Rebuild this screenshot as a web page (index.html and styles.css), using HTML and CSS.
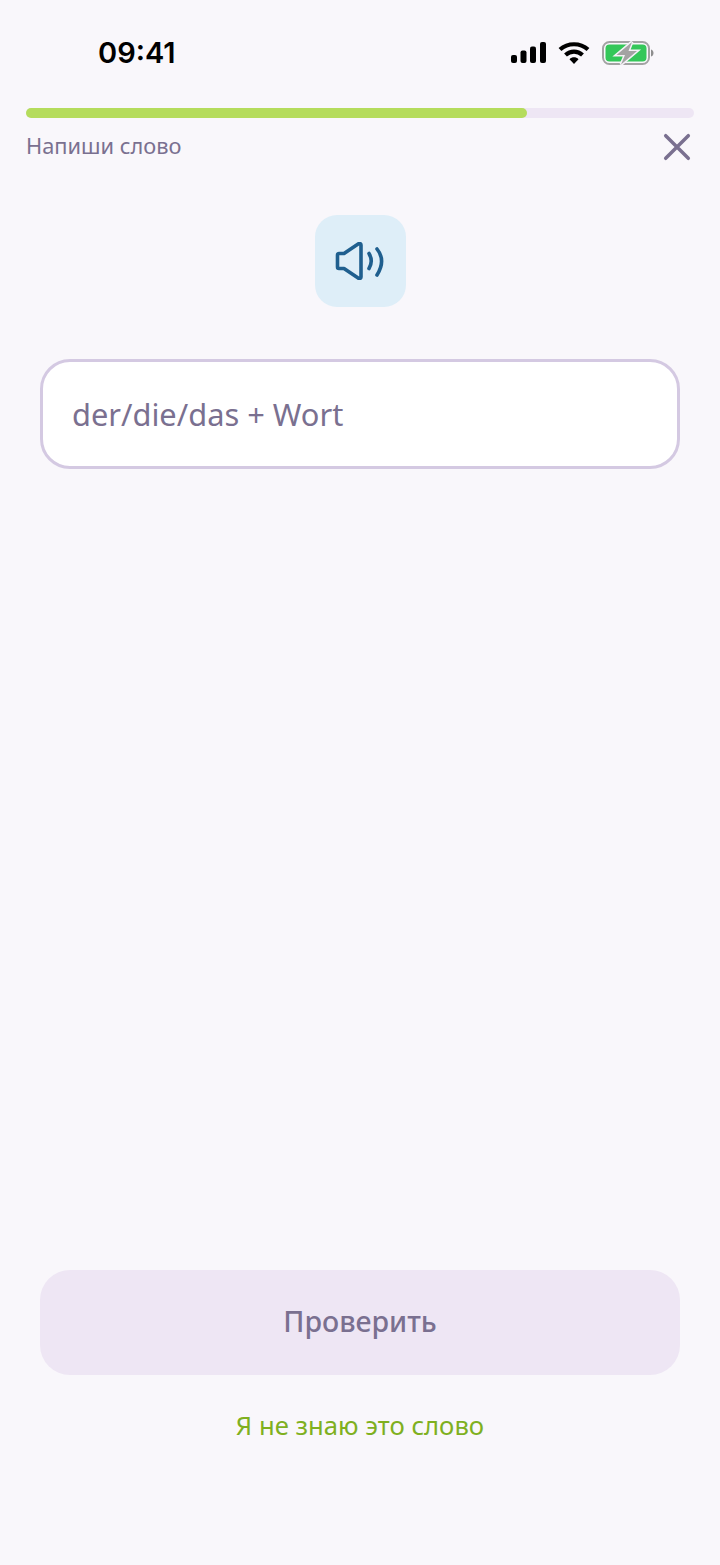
FILE: index.html
```html
<!DOCTYPE html>
<html lang="en">
<head>
  <meta name="viewport" content="width=device-width, initial-scale=1.0">
  <meta charset="UTF-8">
  <title>Напиши слово</title>
  <link rel="stylesheet" href="styles.css">
</head>
<body>
  <div class="screen">
    <div class="status-bar">
      <span class="time">09:41</span>
      <div class="status-icons">
        <svg class="signal" width="38" height="24" viewBox="0 0 38 24">
          <rect x="3" y="14" width="6" height="8" rx="2"/>
          <rect x="12.500" y="9.500" width="6" height="12.500" rx="2"/>
          <rect x="22" y="5.500" width="6" height="16.500" rx="2"/>
          <rect x="32" y="1" width="6" height="21" rx="2"/>
        </svg>
        <svg class="wifi" width="32" height="24" viewBox="0 0 32 24">
          <path d="M2 8.500C9.800 1.500 22.200 1.500 30 8.500" fill="none" stroke="#000" stroke-width="4.200"/>
          <path d="M7.500 14C12.500 9.500 19.500 9.500 24.500 14" fill="none" stroke="#000" stroke-width="4.200"/>
          <path d="M11.500 18.200C14 15.600 18 15.600 20.500 18.200L16 23Z"/>
        </svg>
        <svg class="battery" width="52" height="26" viewBox="0 0 52 26">
          <rect x="1" y="2" width="46" height="22" rx="6.500" fill="none" stroke="#a3a3a3" stroke-width="2"/>
          <rect x="3.500" y="4.500" width="41" height="17" rx="4" fill="#34c759"/>
          <path d="M49 9.500C50.800 10 51.500 11.500 51.500 13C51.500 14.500 50.800 16 49 16.500Z" fill="#8e8e8e"/>
          <path d="M30 2L14.500 15H23L19 24.500L35 11H26.500Z" fill="#a3a3a3" stroke="#f4f1f6" stroke-width="3" paint-order="stroke"/>
        </svg>
      </div>
    </div>

    <div class="progress">
      <div class="progress-fill"></div>
    </div>

    <div class="task-row">
      <span class="task-label">Напиши слово</span>
      <svg class="close" width="28" height="28" viewBox="0 0 28 28">
        <path d="M2.700 2.700L25.300 25.300M25.300 2.700L2.700 25.300" fill="none" stroke="#7a7090" stroke-width="3.500" stroke-linecap="round"/>
      </svg>
    </div>

    <button class="sound-btn">
      <svg width="50" height="38" viewBox="0 0 50 38">
        <path d="M2.500 13V25C2.500 26 3.200 26.500 4 26.500H9L23.500 36.200C24.800 37 26 36.400 26 35V3C26 1.600 24.800 1 23.500 1.800L9 11.500H4C3.200 11.500 2.500 12 2.500 13Z" fill="none" stroke="#1f5f8f" stroke-width="3.600" stroke-linejoin="round"/>
        <path d="M34 11.500C37 16.500 37 21.500 34 26.500" fill="none" stroke="#1f5f8f" stroke-width="3.600" stroke-linecap="round"/>
        <path d="M42 7C48 14.500 48 23.500 42 33" fill="none" stroke="#1f5f8f" stroke-width="3.600" stroke-linecap="round"/>
      </svg>
    </button>

    <div class="word-input">der/die/das + Wort</div>

    <div class="actions">
      <button class="check-btn">Проверить</button>
      <a class="skip-link">Я не знаю это слово</a>
    </div>
  </div>
</body>
</html>
```

FILE: styles.css
```css
* {
  box-sizing: border-box;
}

body {
  margin: 0;
  background-color: #f9f7fb;
  font-family: "Noto Sans", "Open Sans", sans-serif;
  color: #7a7090;
}

.screen {
  display: flex;
  flex-direction: column;
  height: 1565px;
  padding: 0 26px;
}

.status-bar {
  display: flex;
  justify-content: space-between;
  align-items: center;
  height: 108px;
  padding: 0 40px 3px 72px;
}

.time {
  font-family: Inter, "Liberation Sans", sans-serif;
  font-size: 29px;
  font-weight: 600;
  color: #000;
}

.status-icons {
  display: flex;
  align-items: center;
  gap: 12px;
}

.progress {
  height: 10px;
  border-radius: 5px;
  background-color: #eee6f4;
}

.progress-fill {
  width: 75%;
  height: 100%;
  border-radius: 5px;
  background-color: #b5dc5c;
}

.task-row {
  display: flex;
  justify-content: space-between;
  align-items: center;
  height: 56px;
  padding-right: 3px;
}

.task-label {
  margin-bottom: 2px;
  font-size: 21.800px;
}

.close {
  margin-top: 2px;
}

.sound-btn {
  display: flex;
  align-items: center;
  justify-content: center;
  width: 91px;
  height: 92px;
  margin: 41px auto 0;
  padding: 0;
  border: none;
  border-radius: 22px;
  background-color: #deeef8;
}

.word-input {
  display: flex;
  align-items: center;
  height: 110px;
  margin: 52px 14px 0;
  padding: 0 29px;
  border: 3px solid #d4c9e2;
  border-radius: 30px;
  background-color: #fff;
  font-size: 30.800px;
}

.actions {
  display: flex;
  flex-direction: column;
  align-items: center;
  margin: auto 14px 0;
  padding-bottom: 122px;
}

.check-btn {
  width: 100%;
  height: 105px;
  padding: 0 0 3px;
  border: none;
  border-radius: 30px;
  background-color: #eee6f4;
  font-family: inherit;
  font-size: 28.500px;
  font-weight: 500;
  color: #7a7090;
}

.skip-link {
  margin-top: 33px;
  font-size: 25.700px;
  line-height: 35px;
  color: #7fb01f;
}
```
